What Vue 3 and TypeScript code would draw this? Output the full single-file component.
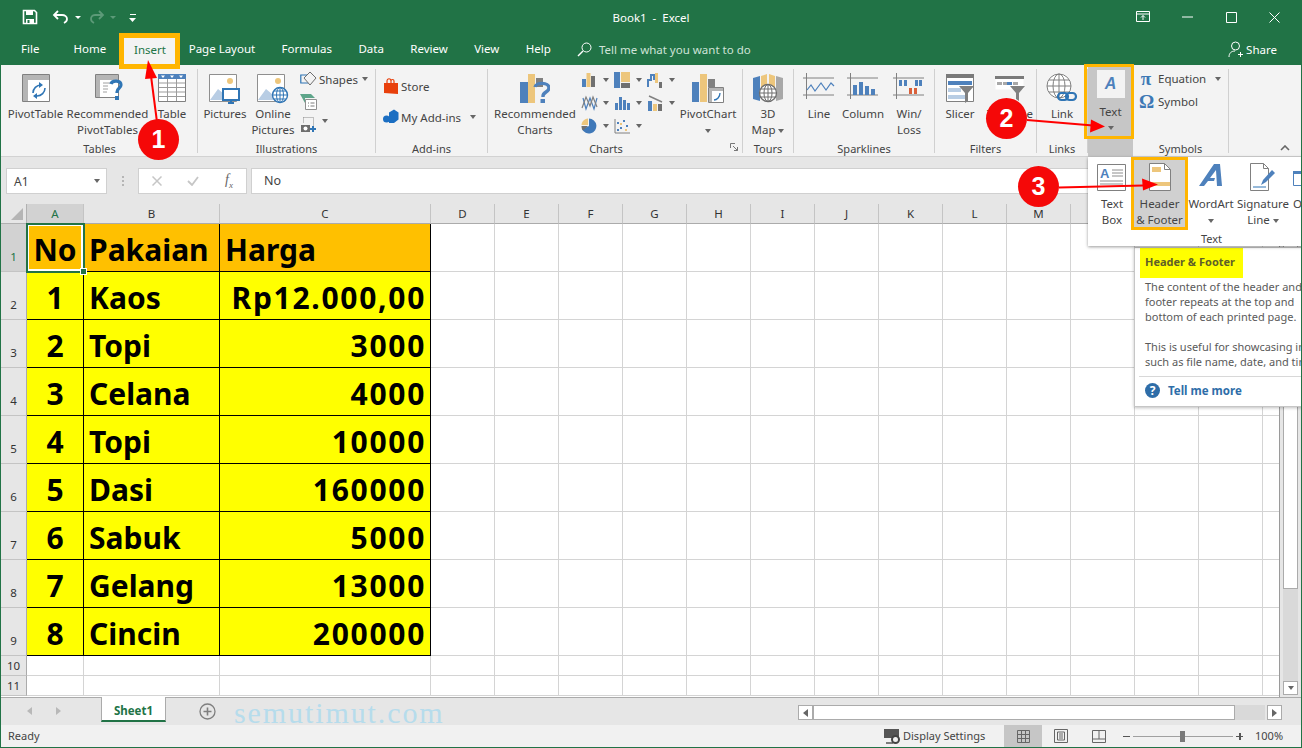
<script setup lang="ts">
const tabs = [
  { name: 'File', cls: 'tab-file' },
  { name: 'Home', cls: '' },
  { name: 'Insert', cls: 'tab-active' },
  { name: 'Page Layout', cls: '' },
  { name: 'Formulas', cls: '' },
  { name: 'Data', cls: '' },
  { name: 'Review', cls: '' },
  { name: 'View', cls: '' },
  { name: 'Help', cls: '' },
]
const cols = ['A', 'B', 'C', 'D', 'E', 'F', 'G', 'H', 'I', 'J', 'K', 'L', 'M', 'N', 'O', 'P', 'Q']
const data: [string, string, string][] = [
  ['1', 'Kaos', 'Rp12.000,00'],
  ['2', 'Topi', '3000'],
  ['3', 'Celana', '4000'],
  ['4', 'Topi', '10000'],
  ['5', 'Dasi', '160000'],
  ['6', 'Sabuk', '5000'],
  ['7', 'Gelang', '13000'],
  ['8', 'Cincin', '200000'],
]
const emptyCols = cols.slice(3)
const chartIcons = [0, 1, 2, 3, 4, 5, 6, 7]
</script>

<template>
  <div class="app">
    <header class="titlebar">
      <div class="qat">
        <svg class="ic" width="16" height="16" viewBox="0 0 16 16"><path d="M1.5 1.5h11l2 2v11h-13z" fill="none" stroke="#fff" stroke-width="1.6"/><path d="M4 2h7v4H4zM4 10h8v5H4z" fill="#fff"/><path d="M5.5 11h2v3h-2z" fill="#217346"/></svg>
        <svg class="ic undo" width="18" height="14" viewBox="0 0 18 14"><path d="M6 1 2 5l4 4M2 5h8c3 0 5 2 5 4s-1 3-3 4" fill="none" stroke="#fff" stroke-width="1.8"/></svg>
        <span class="caret-w"></span>
        <svg class="ic redo" width="16" height="14" viewBox="0 0 16 14"><path d="M10 1l4 4-4 4M14 5H6C3 5 2 7 2 9s1 3 3 4" fill="none" stroke="#5c9a78" stroke-width="1.8"/></svg>
        <span class="caret-w dim"></span>
        <svg class="ic more" width="8" height="9" viewBox="0 0 8 9"><path d="M1 1h6v1H1zM0 5h7L3.500 9z" fill="#fff"/></svg>
      </div>
      <div class="doc-title">Book1&nbsp; -&nbsp; Excel</div>
      <div class="winctl">
        <svg width="14" height="12" viewBox="0 0 14 12"><path d="M.5.5h13v10H.5zM.5 3h13M7 9V4.500M5 6.500l2-2 2 2" fill="none" stroke="#fff"/></svg>
        <svg width="11" height="2" viewBox="0 0 11 2"><path d="M0 1h11" stroke="#fff"/></svg>
        <svg width="11" height="11" viewBox="0 0 11 11"><path d="M.5.5h10v10H.5z" fill="none" stroke="#fff"/></svg>
        <svg width="11" height="11" viewBox="0 0 11 11"><path d="M.5.5l10 10M10.500.5l-10 10" stroke="#fff" fill="none"/></svg>
      </div>
    </header>

    <nav class="tabsbar">
      <div v-for="t in tabs" :key="t.name" class="tab" :class="t.cls">{{ t.name }}</div>
      <svg class="search-ic" width="15" height="15" viewBox="0 0 15 15"><circle cx="9.500" cy="5.500" r="4.500" fill="none" stroke="#fff"/><path d="M6 9l-5 5" stroke="#fff" stroke-width="1.400"/></svg>
      <div class="tellme">Tell me what you want to do</div>
      <div class="share">
        <svg width="16" height="17" viewBox="0 0 16 17"><circle cx="7.500" cy="5" r="4" fill="none" stroke="#fff"/><path d="M1 16c0-4 2.500-6 6-6M12.500 11v5M10 13.500h5" fill="none" stroke="#fff"/></svg>
        <span>Share</span>
      </div>
    </nav>

    <section class="ribbon">
      <!-- Tables -->
      <div class="group g-tables">
        <div class="group-body">
          <div class="big w61 ml3b">
            <svg class="bigic" width="30" height="30" viewBox="0 0 30 30"><path d="M1.500 1.500h27v27h-27z" fill="#fff" stroke="#808080"/><path d="M2 2h26v5H2zM2 7h5v21H2z" fill="#b5b5b5"/><path d="M12 20a8 8 0 0 1 8-8M14 23h2a8 8 0 0 0 8-8" fill="none" stroke="#2f75b5" stroke-width="1.600"/><path d="M18 9l4 3-4 3zM16 20l-4 3 4 3z" fill="#2f75b5"/></svg>
            <span>PivotTable</span>
          </div>
          <div class="big w83">
            <svg class="bigic s5" width="30" height="30" viewBox="0 0 30 30"><path d="M.5 1.500h23v23H.5z" fill="#fff" stroke="#808080"/><path d="M1 2h22v5H1zM1 7h4v17H1z" fill="#b5b5b5"/><path d="M8 10h7M8 13h5M8 16h5M8 19h4" stroke="#a0a0a0"/><path d="M16 11c1-4 10-4 10 1 0 3-4 3-4 7v1" fill="none" stroke="#2f75b5" stroke-width="3.200"/><path d="M20 23h4v4h-4z" fill="#2f75b5"/></svg>
            <span>Recommended<br />PivotTables</span>
          </div>
          <div class="big w46">
            <svg class="bigic" width="30" height="30" viewBox="0 0 30 30"><path d="M1.500 1.500h27v27h-27z" fill="#fff" stroke="#808080"/><path d="M1 1h28v5H1z" fill="#4e81bc"/><path d="M4 2.500h4L6 5zM13 2.500h4L15 5zM22 2.500h4L24 5z" fill="#fff"/><path d="M2 10h26M2 14.500h26M2 19h26M2 23.500h26M10.500 6v22M19.500 6v22" stroke="#9b9b9b"/></svg>
            <span>Table</span>
          </div>
        </div>
        <div class="group-label">Tables</div>
      </div>

      <!-- Illustrations -->
      <div class="group g-illus">
        <div class="group-body">
          <div class="big w48 ml3b">
            <svg class="bigic" width="32" height="32" viewBox="0 0 32 32"><path d="M.5 1.500h27v27H.5z" fill="#fff" stroke="#8f8f8f"/><circle cx="21" cy="8" r="3" fill="#edc67c"/><path d="M1 27l8-11 6 5 3-2 6 8z" fill="#b8cde4"/><path d="M14 16h16v11H14z" fill="#fff" stroke="#2f75b5" stroke-width="2"/><path d="M19 30h6M22 27v3" stroke="#2f75b5" stroke-width="2"/></svg>
            <span>Pictures</span>
          </div>
          <div class="big w48">
            <svg class="bigic" width="32" height="32" viewBox="0 0 32 32"><path d="M.5 1.500h27v27H.5z" fill="#fff" stroke="#8f8f8f"/><circle cx="21" cy="8" r="3" fill="#edc67c"/><path d="M1 27l8-11 6 5 3-2 6 8z" fill="#b8cde4"/><circle cx="23" cy="22" r="7.500" fill="#fff" stroke="#2f75b5" stroke-width="1.400"/><path d="M15.500 22h15M17 18h12M17 26h12M23 14.500v15" stroke="#2f75b5"/><ellipse cx="23" cy="22" rx="3.500" ry="7.500" fill="none" stroke="#2f75b5"/></svg>
            <span>Online<br />Pictures</span>
          </div>
          <div class="smallcol">
            <div class="small h22">
              <svg width="17" height="16" viewBox="0 0 17 16"><path d="M.8 4h8v8h-8z" fill="none" stroke="#2f75b5" stroke-width="1.200"/><path d="M10 1l6 6-6 7-6-7z" fill="#f3f3f3" stroke="#6e6e6e"/></svg>
              <span class="tx ml2">Shapes</span><i class="caret ml4"></i>
            </div>
            <div class="small h22">
              <svg width="17" height="17" viewBox="0 0 17 17"><path d="M0 1h11l4 4H5v5z" fill="#5ea58a"/><path d="M5.500 6.500h11v10h-11z" fill="#fff" stroke="#8f8f8f"/><path d="M8 10h1M8 13h1M10.500 10h4M10.500 13h4" stroke="#7a7a7a"/></svg>
            </div>
            <div class="small h24">
              <svg width="17" height="17" viewBox="0 0 17 17"><path d="M3.500 1.500h10v9" fill="none" stroke="#8a8a8a" stroke-dasharray="1 1"/><path d="M3.500 1.500v6" stroke="#8a8a8a" stroke-dasharray="1 1"/><path d="M1 9h9v7H1z" fill="#6e6e6e"/><circle cx="5.500" cy="12.500" r="2" fill="#fff"/><path d="M10 13h6M13 10v6" stroke="#2f75b5" stroke-width="2"/></svg>
              <i class="caret ml5 up3"></i>
            </div>
          </div>
        </div>
        <div class="group-label">Illustrations</div>
      </div>

      <!-- Add-ins -->
      <div class="group g-addins">
        <div class="group-body addins-body">
          <div class="small h30">
            <svg width="16" height="17" viewBox="0 0 16 17"><path d="M1 5h14v11L1 15z" fill="#e8400c"/><path d="M4 5V3c0-3 4-3 4 0v2M8 3c0-2 3-2 3 0v2" fill="none" stroke="#e8400c" stroke-width="1.200"/></svg>
            <span class="tx ml2">Store</span>
          </div>
          <div class="small h30 mt1">
            <svg width="16" height="16" viewBox="0 0 16 16"><path d="M6 3.500L11 0.500l4.500 3v7L11 14H6z" fill="#1b6ec2"/><circle cx="3.500" cy="10" r="3.500" fill="#1b6ec2"/></svg>
            <span class="tx ml2">My Add-ins</span><i class="caret ml9"></i>
          </div>
        </div>
        <div class="group-label">Add-ins</div>
      </div>

      <!-- Charts -->
      <div class="group g-charts">
        <div class="group-body">
          <div class="big w88 ml3b">
            <svg class="bigic" width="30" height="30" viewBox="0 0 30 30"><path d="M0 9h8v21H0z" fill="#4e81bc"/><path d="M8 1h7v29H8z" fill="#edc67c"/><path d="M16 5h7v9h-7z" fill="#808080"/><path d="M15 14c1-5 14-5 14 1 0 4-6 4-6 8v1" fill="none" stroke="#4e81bc" stroke-width="3.400"/><path d="M20.500 26h4.500v4h-4.500z" fill="#4e81bc"/></svg>
            <span>Recommended<br />Charts</span>
          </div>
          <div class="chart-grid">
            <div v-for="c in chartIcons" :key="c" class="chart-cell">
              <svg width="17" height="16" viewBox="0 0 17 16">
                <g v-if="c === 0"><path d="M1 7h4v8H1z" fill="#4e81bc"/><path d="M5.500 1h4v14h-4z" fill="#edc67c"/><path d="M10 4h4v11h-4z" fill="#707070"/></g>
                <g v-else-if="c === 1"><path d="M0 0h6v16H0z" fill="#4e81bc"/><path d="M7 0h9v10H7z" fill="#edc67c"/><path d="M7 11h9v5H7z" fill="#707070"/></g>
                <g v-else-if="c === 2"><path d="M1 15V8h3V3h3v5" fill="none" stroke="#4e81bc" stroke-width="2"/><path d="M8 1h3v10H8z" fill="#edc67c"/><path d="M12 10h3v6h-3z" fill="#707070"/></g>
                <g v-else-if="c === 3"><path d="M2 3l3 11 4-11 4 11 3-11" fill="none" stroke="#4e81bc" stroke-width="1.200"/><path d="M1 13l4-11 4 9 3-9 4 10" fill="none" stroke="#808080" stroke-width="1.200"/></g>
                <g v-else-if="c === 4"><path d="M1 8h3v7H1zM5 2h3v13H5zM9 5h3v10H9zM13 8h3v7h-3z" fill="#4e81bc"/></g>
                <g v-else-if="c === 5"><path d="M1 6h4v10H1z" fill="#4e81bc"/><path d="M6 9h4v7H6z" fill="#edc67c"/><path d="M11 9h4v7h-4z" fill="#707070"/><path d="M2 1l13 6" stroke="#808080" stroke-width="1.500"/></g>
                <g v-else-if="c === 6"><path d="M8 8V.5A7.500 7.500 0 1 1 1 11z" fill="#3f78b8"/><path d="M7 7V.5C3 1 .5 4 .5 7z" fill="#edc67c"/><path d="M.5 8H7L2 12.500C1 11.500.5 10 .5 8z" fill="#707070"/></g>
                <g v-else><path d="M1 1v14h15" fill="none" stroke="#808080"/><path d="M3 4h2v2H3zM9 2h2v2H9zM6 9h2v2H6zM12 7h2v2h-2zM3 11h2v2H3z" fill="#4e81bc"/><path d="M6 5h2v2H6zM11 11h2v2h-2z" fill="#edc67c"/></g>
              </svg>
              <i class="caret ml5"></i>
            </div>
          </div>
          <div class="big w72">
            <svg class="bigic" width="32" height="30" viewBox="0 0 32 30"><path d="M0 9h7v20H0z" fill="#4e81bc"/><path d="M8 1h7v28H8z" fill="#edc67c"/><path d="M16 6h7v8h-7z" fill="#808080"/><path d="M16.500 14.500h15v15h-15z" fill="#fff" stroke="#808080"/><path d="M17 15h14v3H17zM17 18h3v11h-3z" fill="#b5b5b5"/><path d="M22 27c3 0 6-3 6-7" fill="none" stroke="#2f75b5" stroke-width="1.300"/></svg>
            <span>PivotChart<br /><i class="caret"></i></span>
          </div>
        </div>
        <div class="group-label charts-label">Charts</div>
        <svg class="launcher" width="8" height="8" viewBox="0 0 8 8"><path d="M.5 5V.5H5M3 3l4.500 4.500M7.500 4v3.500H4" fill="none" stroke="#777"/></svg>
      </div>

      <!-- Tours -->
      <div class="group g-tours">
        <div class="group-body">
          <div class="big w50">
            <svg class="bigic" width="30" height="30" viewBox="0 0 30 30"><path d="M0 5l7-2v25l-7-2z" fill="#4e81bc"/><path d="M8 3l6-2v14H8zM16 1l6 2v12h-6z" fill="#edc67c"/><path d="M23 3l7 2v21l-7 2z" fill="#a8a8a8"/><circle cx="15" cy="20" r="8.500" fill="#fff" stroke="#6e6e6e" stroke-width="1.300"/><path d="M6.500 20h17M8 16h14M8 24h14M15 11.500v17" stroke="#6e6e6e"/><ellipse cx="15" cy="20" rx="4" ry="8.500" fill="none" stroke="#6e6e6e"/></svg>
            <span>3D<br />Map <i class="caret"></i></span>
          </div>
        </div>
        <div class="group-label">Tours</div>
      </div>

      <!-- Sparklines -->
      <div class="group g-spark">
        <div class="group-body">
          <div class="big w42 ml4b">
            <svg class="bigic" width="32" height="28" viewBox="0 0 32 28"><path d="M0 5h31M0 22h31M3.500 0v26" stroke="#808080" fill="none"/><path d="M4 17l4-5 4 6 6-8 5 7 5-7 3 3" fill="none" stroke="#4e81bc" stroke-width="1.200"/></svg>
            <span>Line</span>
          </div>
          <div class="big w46">
            <svg class="bigic" width="32" height="28" viewBox="0 0 32 28"><path d="M0 5h31M0 22h31M3.500 0v26" stroke="#808080" fill="none"/><path d="M6 12h4v10H6zM12 9h4v13h-4zM18 13h4v9h-4zM24 16h4v6h-4z" fill="#4e81bc"/></svg>
            <span>Column</span>
          </div>
          <div class="big w46">
            <svg class="bigic" width="32" height="28" viewBox="0 0 32 28"><path d="M0 5h31M0 22h31M3.500 0v26" stroke="#808080" fill="none"/><path d="M6 7h3v6H6zM11 7h3v6h-3zM22 7h3v6h-3" fill="#4e81bc"/><path d="M26 7h3v6h-3z" fill="#4e81bc"/><path d="M16 15h3v6h-3zM21 15h3v6h-3z" fill="#d9603a"/></svg>
            <span>Win/<br />Loss</span>
          </div>
        </div>
        <div class="group-label">Sparklines</div>
      </div>

      <!-- Filters -->
      <div class="group g-filters">
        <div class="group-body">
          <div class="big w50">
            <svg class="bigic" width="30" height="30" viewBox="0 0 30 30"><path d="M1.500 1.500h27v27h-27z" fill="#fff" stroke="#808080"/><path d="M1 1h28v4H1z" fill="#7a7a7a"/><path d="M3 8h24v4H3z" fill="#4e81bc"/><path d="M3 15h13v4H3z" fill="#b8cde4"/><path d="M3 22h20v4H3z" fill="#b8cde4"/><path d="M14 13h15l-6 7v8l-3 2v-10z" fill="#808080"/></svg>
            <span>Slicer</span>
          </div>
          <div class="big w50">
            <svg class="bigic" width="30" height="28" viewBox="0 0 30 28"><path d="M.5 3.500h28v13H.5z" fill="#fff"/><path d="M0 3h29v3H0z" fill="#7a7a7a"/><path d="M2 9h5v3H2zM8 9h5v3H8z" fill="#a9a9a9"/><path d="M12 9h5v3h-5z" fill="#4e81bc"/><path d="M18 9h5v3h-5z" fill="#a9a9a9"/><path d="M15 13h15l-6 7v8l-3-2v-6z" fill="#808080"/></svg>
            <span>Timeline</span>
          </div>
        </div>
        <div class="group-label">Filters</div>
      </div>

      <!-- Links -->
      <div class="group g-links">
        <div class="group-body">
          <div class="big w50">
            <svg class="bigic" width="32" height="30" viewBox="0 0 32 30"><circle cx="13" cy="13" r="12" fill="#fff" stroke="#808080"/><ellipse cx="13" cy="13" rx="6" ry="12" fill="none" stroke="#808080"/><path d="M1 13h24M3 7h20M3 19h20M13 1v24" stroke="#808080"/><rect x="12" y="20" width="10" height="7" rx="3.500" fill="none" stroke="#2f75b5" stroke-width="2.200"/><rect x="20" y="20" width="10" height="7" rx="3.500" fill="none" stroke="#2f75b5" stroke-width="2.200"/></svg>
            <span>Link</span>
          </div>
        </div>
        <div class="group-label">Links</div>
      </div>

      <!-- Text -->
      <div class="group g-text">
        <div class="text-tile"><span class="tile-a">A</span></div>
        <span class="text-label">Text</span>
        <i class="caret"></i>
      </div>

      <!-- Symbols -->
      <div class="group g-symbols">
        <div class="group-body symbols-body">
          <div class="small h23">
            <span class="sym">π</span><span class="tx sym-tx">Equation</span><i class="caret ml9"></i>
          </div>
          <div class="small h23">
            <span class="sym">Ω</span><span class="tx sym-tx">Symbol</span>
          </div>
        </div>
        <div class="group-label symbols-label">Symbols</div>
      </div>

      <svg class="collapse" width="10" height="6" viewBox="0 0 10 6"><path d="M1 5l4-4 4 4" fill="none" stroke="#666" stroke-width="1.600"/></svg>
    </section>

    <section class="formulabar">
      <div class="namebox"><span>A1</span><i class="caret"></i></div>
      <div class="fdots"><b></b><b></b><b></b></div>
      <div class="fbtns">
        <svg width="10" height="10" viewBox="0 0 10 10"><path d="M.5.5l9 9M9.500.5l-9 9" stroke="#c6c6c6" stroke-width="1.500"/></svg>
        <svg width="12" height="10" viewBox="0 0 12 10"><path d="M1 5l4 4 6-8" stroke="#c6c6c6" stroke-width="1.800" fill="none"/></svg>
        <span class="fx">f<sub>x</sub></span>
      </div>
      <div class="finput">No</div>
    </section>

    <section class="sheetwrap">
      <div class="sheet">
        <div class="corner"><span></span></div>
        <div v-for="(c, i) in cols" :key="c" class="colh" :class="{ sel: i === 0 }">{{ c }}</div>

        <div class="rowh sel">1</div>
        <div class="cell head center a1">No<span class="handle"></span></div>
        <div class="cell head">Pakaian</div>
        <div class="cell head">Harga</div>
        <div v-for="c in emptyCols" :key="'r1' + c" class="blank"></div>

        <template v-for="(r, i) in data" :key="r[0]">
          <div class="rowh">{{ i + 2 }}</div>
          <div class="cell body center">{{ r[0] }}</div>
          <div class="cell body">{{ r[1] }}</div>
          <div class="cell body right">{{ r[2] }}</div>
          <div v-for="c in emptyCols" :key="r[0] + c" class="blank"></div>
        </template>

        <template v-for="n in [10, 11]" :key="n">
          <div class="rowh big-n">{{ n }}</div>
          <div v-for="c in cols" :key="n + c" class="blank"></div>
        </template>
      </div>
      <div class="vscroll">
        <div class="vbtn"><i class="caret up"></i></div>
        <div class="vthumb"></div>
        <div class="vtrack"></div>
        <div class="vbtn last"><i class="caret"></i></div>
      </div>
    </section>

    <section class="sheetbar">
      <div class="navs"><i class="tri-l"></i><i class="tri-r"></i></div>
      <div class="sheettab">Sheet1</div>
      <svg class="addsheet" width="17" height="17" viewBox="0 0 17 17"><circle cx="8.500" cy="8.500" r="7.500" fill="none" stroke="#7f7f7f" stroke-width="1.300"/><path d="M8.500 4.500v8M4.500 8.500h8" stroke="#7f7f7f" stroke-width="1.600"/></svg>
      <div class="watermark">semutimut.com</div>
      <div class="hscroll">
        <div class="hbtn"><i class="tri-l dark"></i></div>
        <div class="hthumb"></div>
        <div class="htrack"></div>
        <div class="hbtn end"><i class="tri-r dark"></i></div>
      </div>
    </section>

    <footer class="status">
      <span class="ready">Ready</span>
      <div class="display">
        <svg width="17" height="17" viewBox="0 0 17 17"><path d="M0 1h15v9H0z" fill="#555"/><path d="M2 15h7" stroke="#555" stroke-width="1.500"/><circle cx="11.500" cy="11.500" r="3.500" fill="#f1f1f1" stroke="#444" stroke-width="2"/></svg>
        <span>Display Settings</span>
      </div>
      <div class="view on">
        <svg width="13" height="13" viewBox="0 0 13 13"><path d="M.5.5h12v12H.5zM.5 4.500h12M.5 8.500h12M4.500.5v12M8.500.5v12" fill="none" stroke="#666"/></svg>
      </div>
      <div class="view">
        <svg width="14" height="14" viewBox="0 0 14 14"><path d="M.5.500h13v13H.5z" fill="none" stroke="#666"/><path d="M3.500 3v8h7V3zM5 5h4M5 7h4M5 9h4" fill="none" stroke="#666"/></svg>
      </div>
      <div class="view">
        <svg width="14" height="13" viewBox="0 0 14 13"><path d="M.5.500h13v12H.5zM.5 9h13M7 .5V9" fill="none" stroke="#666"/></svg>
      </div>
      <div class="zoom">
        <span class="zbtn minus"></span>
        <div class="slider"><span class="knob"></span></div>
        <span class="zbtn plus"></span>
      </div>
      <span class="pct">100%</span>
    </footer>

    <!-- Text dropdown gallery, over the sheet -->
    <div class="gallery">
      <div class="g-item t-box">
        <svg width="30" height="28" viewBox="0 0 30 28"><path d="M.5 1.500h28v26H.5z" fill="#fff" stroke="#808080"/><path d="M15 7h11M15 10h11M15 13h11M3 18h23M3 21h23" stroke="#8e8e8e"/><text x="3" y="15" font-family="Liberation Sans, sans-serif" font-weight="700" font-size="13" fill="#4e81bc">A</text></svg>
        <span>Text<br />Box</span>
      </div>
      <div class="g-item hf">
        <svg width="22" height="28" viewBox="0 0 22 28"><path d="M.5.500h15l6 6v21H.5z" fill="#fff" stroke="#808080"/><path d="M15.500.5v6h6" fill="none" stroke="#808080"/><path d="M3 4h9v5H3zM3 19h18v4H3z" fill="#edc67c"/></svg>
        <span>Header<br />&amp; Footer</span>
      </div>
      <div class="g-item wa">
        <svg width="24" height="28" viewBox="0 0 24 28"><path d="M0 23L15 1h6l2 22h-5l-1-16-6 8h5l-1 3H9l-4 5z" fill="#4e81bc"/></svg>
        <span>WordArt<br /><i class="caret"></i></span>
      </div>
      <div class="g-item sig">
        <svg width="26" height="28" viewBox="0 0 26 28"><path d="M.5.500h13l5 5v22H.5z" fill="#fff" stroke="#808080"/><path d="M13.500.5v5h5" fill="none" stroke="#808080"/><path d="M3 24h13" stroke="#2f75b5"/><path d="M11 22l2-5 9-10 3 3-9 9z" fill="#4e81bc"/></svg>
        <span>Signature<br />Line <i class="caret"></i></span>
      </div>
      <div class="g-item obj">
        <svg width="14" height="28" viewBox="0 0 14 28"><path d="M.5 8.500h13v14H.5z" fill="#fff" stroke="#4e81bc"/><path d="M0 8h14v3H0z" fill="#4e81bc"/></svg>
        <span>Object</span>
      </div>
      <div class="gallery-label">Text</div>
    </div>

    <!-- Screen tip -->
    <div class="tip">
      <div class="tip-title">Header &amp; Footer</div>
      <p>The content of the header and<br />footer repeats at the top and<br />bottom of each printed page.</p>
      <p class="p2">This is useful for showcasing information<br />such as file name, date, and time.</p>
      <div class="tip-more">
        <span class="q">?</span>
        <b>Tell me more</b>
      </div>
    </div>

    <!-- Tutorial annotations -->
    <svg class="arrows" width="1302" height="748" viewBox="0 0 1302 748">
      <path d="M157 122 151 76" stroke="#f00" stroke-width="2" fill="none"/>
      <path d="M148 60 157 78 145 79z" fill="#f00"/>
      <path d="M1027 120l66 5.500" stroke="#f00" stroke-width="2" fill="none"/>
      <path d="M1105 126.500l-15 6 1-13z" fill="#f00"/>
      <path d="M1059 187.500l84-2" stroke="#f00" stroke-width="2" fill="none"/>
      <path d="M1158 184.500l-16-6 1 12z" fill="#f00"/>
    </svg>
    <div class="badge b1">1</div>
    <div class="badge b2">2</div>
    <div class="badge b3">3</div>
    <div class="outline o-text"></div>
  </div>
</template>

<style scoped>
.app {
  position: relative;
  width: 1302px;
  height: 748px;
  box-sizing: border-box;
  border: 1px solid #217346;
  overflow: hidden;
  display: flex;
  flex-direction: column;
  background: #fff;
  font-family: "Noto Sans", "Open Sans", sans-serif;
  font-size: 11.5px;
  color: #444;
}
i { display: inline-block; font-style: normal; }
.caret {
  display: inline-block;
  width: 0; height: 0;
  border-left: 3.5px solid transparent;
  border-right: 3.5px solid transparent;
  border-top: 4px solid #666;
  vertical-align: middle;
}
.caret.up { border-top: 0; border-bottom: 4px solid #666; }
.ml2 { margin-left: 2px; } .ml4 { margin-left: 4px; } .ml5 { margin-left: 5px; }
.ml9 { margin-left: 9px; }
.mt1 { margin-top: 1px; }
.up3 { margin-top: -6px; }

/* title bar */
.titlebar {
  height: 32px; flex: none;
  background: #217346;
  display: flex; align-items: center; position: relative; color: #fff;
}
.qat { display: flex; align-items: center; padding-left: 21px; width: 300px; }
.ic.undo { margin-left: 14px; }
.caret-w { width: 0; height: 0; border-left: 3px solid transparent; border-right: 3px solid transparent; border-top: 3px solid #fff; margin-left: 5px; }
.caret-w.dim { border-top-color: #5c9a78; }
.ic.redo { margin-left: 8px; }
.ic.more { margin-left: 13px; }
.doc-title { text-align: center; font-size: 11.5px; position: absolute; left: 0; right: 0; top: 9px; }
.winctl { margin-left: auto; display: flex; align-items: center; width: 165px; justify-content: space-between; padding-right: 21px; box-sizing: border-box; }

/* tabs */
.tabsbar {
  height: 32px; flex: none; background: #217346;
  display: flex; align-items: center; color: #fff; padding-left: 7px;
  font-size: 11.5px; position: relative;
}
.tab { padding: 0 13.200px; line-height: 32px; height: 32px; color: #fff; }
.tab-file { padding-left: 13px; padding-right: 14px; margin-right: 7px; }
.tab-active {
  background: #f3f3f3; color: #217346; box-sizing: border-box;
  border: 5px solid #ffb500; height: 36px; line-height: 24px; padding: 0; width: 61px;
  margin-left: 0; margin-right: -5px; align-self: flex-start; position: relative; z-index: 2; text-align: center;
}
.search-ic { margin-left: 13px; }
.tellme { margin-left: 7px; color: #cfe3d8; }
.share { margin-left: auto; display: flex; align-items: center; gap: 2px; padding-right: 24px; }

/* ribbon */
.ribbon {
  height: 92px; flex: none; background: #f3f3f3;
  display: flex; position: relative; border-bottom: 1px solid #d2d2d2; box-sizing: border-box;
  padding-left: 1px;
}
.group {
  position: relative; flex: none; height: 84px; margin-top: 4px;
  border-right: 1px solid #d0d0d0; box-sizing: border-box;
  display: flex; flex-direction: column;
}
.group-body { display: flex; flex: none; height: 71px; box-sizing: border-box; }
.group-label { flex: none; text-align: center; line-height: 14px; margin-top: 2px; font-size: 11px; color: #444; }
.charts-label { padding-right: 18px; }
.symbols-label { margin-top: 4px; }
.g-tables { width: 196px; }
.g-illus { width: 178px; }
.g-addins { width: 112px; }
.g-charts { width: 255px; }
.g-tours { width: 51px; }
.g-spark { width: 141px; }
.g-filters { width: 102px; }
.g-links { width: 51px; }
.g-symbols { width: 96px; }
.big {
  flex: none; display: flex; flex-direction: column; align-items: center; text-align: center;
  line-height: 16px; white-space: nowrap; padding-top: 4px; box-sizing: border-box; height: 71px;
}
.big span { margin-top: auto; display: block; height: 34px; }
.bigic { flex: none; }
.s5 { margin-left: 5px; }
.w42 { width: 42px; } .w46 { width: 46px; } .w48 { width: 48px; }
.w50 { width: 50px; } .w61 { width: 61px; } .w72 { width: 72px; } .w83 { width: 83px; } .w88 { width: 88px; }
.ml3b { margin-left: 3px; } .ml4b { margin-left: 4px; }
.smallcol { display: flex; flex-direction: column; margin-top: -1px; margin-left: 3px; }
.small { display: flex; align-items: center; white-space: nowrap; }
.h22 { height: 22px; } .h23 { height: 23px; } .h24 { height: 24px; } .h30 { height: 30px; }
.tx { font-size: 11.5px; }
.addins-body { flex-direction: column; padding: 2px 0 0 7px; }
.chart-grid { display: grid; grid-template-columns: 33px 33px 33px; grid-auto-rows: 23px; margin: -1px 0 0 2px; width: 91px; height: 69px; }
.chart-cell { display: flex; align-items: center; }
.launcher { position: absolute; right: 4px; bottom: 2px; }
.g-text {
  width: 45px; height: 92px; margin-top: 0; background: #c6c6c6; border: 0;
  align-items: center; padding-top: 5px;
}
.text-tile { width: 28px; height: 28px; background: #f3f3f3; display: flex; align-items: center; justify-content: center; flex: none; }
.tile-a { font-family: "Liberation Sans", sans-serif; font-weight: 700; font-style: italic; font-size: 16px; line-height: 18px; color: #4e81bc; }
.text-label { line-height: 16px; margin-top: 6px; margin-bottom: 6px; }
.symbols-body { flex-direction: column; margin-top: -2px; padding-left: 6px; }
.sym { font-family: "Liberation Serif", serif; font-size: 19px; font-weight: 700; color: #3d78b5; width: 14px; line-height: 20px; text-align: center; }
.sym-tx { margin-left: 5px; }
.collapse { position: absolute; right: 11px; bottom: 5px; }

/* formula bar */
.formulabar {
  height: 47px; flex: none; background: #e6e6e6; box-sizing: border-box;
  display: flex; padding: 11px 0 10px 5px; align-items: stretch; font-size: 12px;
}
.namebox {
  width: 101px; background: #fff; border: 1px solid #d0d0d0; box-sizing: border-box;
  display: flex; align-items: center; justify-content: space-between; padding: 0 6px 0 7px; color: #444;
}
.fdots { width: 31px; display: flex; flex-direction: column; align-items: center; justify-content: center; gap: 2px; }
.fdots b { width: 2px; height: 2px; background: #b5b5b5; display: block; }
.fbtns {
  width: 109px; background: #fff; border: 1px solid #d0d0d0; box-sizing: border-box;
  display: flex; align-items: center; padding-left: 13px; gap: 25px;
}
.fx { font-family: "Liberation Serif", serif; font-style: italic; font-size: 14px; color: #666; margin-left: 1px; }
.fx sub { font-size: 9px; }
.finput { flex: 1; margin-left: 4px; background: #fff; border: 1px solid #d0d0d0; border-right: 0; padding-left: 12px; line-height: 23px; color: #444; font-size: 12.500px; }

/* sheet */
.sheetwrap { flex: none; height: 493px; display: flex; overflow: hidden; background: #e6e6e6; }
.sheet {
  width: 1279px; flex: none; overflow: hidden; background: #fff;
  display: grid;
  grid-template-columns: 26px 57px 136px 211px repeat(13, 64px) 17px;
  grid-template-rows: 20px repeat(9, 48px) 20px 20px;
  align-content: start;
  border-right: 1px solid #9a9a9a;
  box-sizing: border-box;
}
.corner { background: #e6e6e6; border-right: 1px solid #b1b1b1; border-bottom: 1px solid #b1b1b1; box-sizing: border-box; position: relative; }
.corner span {
  position: absolute; right: 3px; bottom: 3px; width: 0; height: 0;
  border-left: 12px solid transparent; border-bottom: 12px solid #b5b5b5;
}
.colh {
  background: #e6e6e6; border-right: 1px solid #c4c4c4; border-bottom: 1px solid #ababab; box-sizing: border-box;
  text-align: center; line-height: 19px; font-size: 11.5px; color: #333;
}
.colh.sel { background: #d2d2d2; color: #217346; border-bottom-color: #217346; }
.rowh {
  background: #e6e6e6; border-right: 1px solid #ababab; border-bottom: 1px solid #c4c4c4; box-sizing: border-box;
  display: flex; align-items: flex-end; justify-content: center; padding-bottom: 7px; font-size: 11.5px; color: #333;
}
.rowh.sel { background: #d2d2d2; color: #217346; border-right-color: #217346; }
.rowh.big-n { align-items: center; padding: 0; }
.blank { border-right: 1px solid #d4d4d4; border-bottom: 1px solid #d4d4d4; box-sizing: border-box; }
.cell {
  box-sizing: border-box; border-right: 1px solid #000; border-bottom: 1px solid #000;
  font-weight: 700; font-size: 30px; color: #000; line-height: 47px; padding: 2px 6px 0 5px; white-space: nowrap;
}
.cell.head { background: #ffc000; }
.cell.body { background: #ff0; }
.center { text-align: center; padding-left: 0; padding-right: 0; }
.right { text-align: right; padding-right: 4px; letter-spacing: 1.7px; }
.a1 { position: relative; outline: 2px solid #217346; outline-offset: -1px; box-shadow: inset 0 0 0 2px #fff; }
.handle { position: absolute; right: -4px; bottom: -4px; width: 5px; height: 5px; background: #217346; border: 1px solid #fff; }
.vscroll { flex: 1; display: flex; flex-direction: column; padding: 0 3px; }
.vbtn { height: 16px; flex: none; background: #fff; border: 1px solid #ababab; box-sizing: border-box; display: flex; align-items: center; justify-content: center; }
.vbtn.last { height: 14px; margin-bottom: 2px; }
.vthumb { height: 369px; flex: none; background: #fff; border: 1px solid #ababab; border-top: 0; box-sizing: border-box; }
.vtrack { flex: 1; background: #d9d9d9; }

/* sheet tabs */
.sheetbar { flex: none; height: 28px; background: #e6e6e6; border-top: 1px solid #ababab; box-sizing: border-box; display: flex; position: relative; }
.navs { width: 100px; display: flex; align-items: center; padding-left: 26px; gap: 24px; box-sizing: border-box; height: 26px; }
.tri-l, .tri-r { width: 0; height: 0; border-top: 4px solid transparent; border-bottom: 4px solid transparent; }
.tri-l { border-right: 5px solid #b8b8b8; }
.tri-r { border-left: 5px solid #b8b8b8; }
.tri-l.dark { border-right-color: #666; }
.tri-r.dark { border-left-color: #666; }
.sheettab {
  width: 65px; height: 25px; background: #fff; border: 1px solid #ababab; border-top: 0; border-bottom: 2px solid #217346; box-sizing: border-box;
  text-align: center; font-weight: 700; font-size: 11.500px; color: #217346; line-height: 27px; margin-top: -1px;
}
.addsheet { margin: 5px 0 0 33px; }
.watermark { margin-left: 18px; font-family: "Liberation Serif", serif; font-size: 30px; line-height: 29px; letter-spacing: 1.900px; color: #b6dcec; white-space: nowrap; }
.hscroll { position: absolute; left: 797px; top: 7px; width: 484px; height: 15px; display: flex; }
.hbtn { width: 15px; background: #fff; border: 1px solid #ababab; box-sizing: border-box; display: flex; align-items: center; justify-content: center; flex: none; }
.hthumb { width: 422px; background: #fff; border: 1px solid #ababab; box-sizing: border-box; flex: none; }
.htrack { width: 30px; background: #d9d9d9; flex: none; }
.hbtn.end { margin-left: 2px; }

/* status */
.status { flex: 1; background: #f1f1f1; display: flex; align-items: center; font-size: 11px; color: #444; position: relative; }
.ready { margin-left: 7px; }
.ready, .display span, .pct { transform: translateY(-1px); }
.display { position: absolute; left: 883px; top: 0; height: 100%; display: flex; align-items: center; gap: 2px; }
.view { position: absolute; top: 0; height: 100%; width: 38px; display: flex; align-items: center; justify-content: center; }
.view.on { left: 1003px; background: #c6c6c6; }
.view:nth-of-type(3) { left: 1041px; }
.view:nth-of-type(4) { left: 1079px; }
.zoom { position: absolute; left: 1122px; top: 0; height: 100%; display: flex; align-items: center; width: 126px; }
.zbtn { position: relative; width: 7px; height: 7px; flex: none; }
.zbtn.minus::before, .zbtn.plus::before { content: ""; position: absolute; left: 0; right: 0; top: 3px; height: 1.500px; background: #555; }
.zbtn.plus::after { content: ""; position: absolute; top: 0; bottom: 0; left: 3px; width: 1.500px; background: #555; }
.slider { flex: none; width: 100px; height: 1px; background: #a0a0a0; margin: 0 3px; position: relative; }
.knob { position: absolute; left: 47px; top: -5px; width: 5px; height: 11px; background: #7a7a7a; }
.pct { position: absolute; left: 1254px; }

/* gallery */
.gallery {
  position: absolute; left: 1087px; top: 156px; width: 215px; height: 89px; background: #fff;
  box-shadow: 0 1px 3px rgba(0,0,0,.4); display: flex; z-index: 3;
}
.g-item { flex: none; display: flex; flex-direction: column; align-items: center; text-align: center; line-height: 16px; padding-top: 6px; box-sizing: border-box; white-space: nowrap; height: 73px; }
.g-item span { margin-top: auto; height: 32px; display: block; margin-bottom: 2px; }
.t-box { width: 43px; padding-left: 5px; }
.hf { width: 57px; background: #d0d0d0; outline: 3px solid #ffb500; outline-offset: -3px; }
.wa { width: 44px; margin-left: 1px; }
.sig { width: 58px; margin-left: 1px; }
.obj { width: 20px; overflow: hidden; margin-left: 1px; align-items: flex-start; }
.gallery-label { position: absolute; left: 0; right: 0; bottom: 0; text-align: center; line-height: 14px; font-size: 11px; padding-left: 32px; }

/* tip */
.tip {
  position: absolute; left: 1133px; top: 246px; width: 200px; height: 160px; background: #fff; z-index: 2;
  border: 1px solid #c6c6c6; box-shadow: 0 1px 3px rgba(0,0,0,.25); box-sizing: border-box; font-size: 11px; line-height: 15px; color: #5a5a5a; white-space: nowrap;
}
.tip-title { position: absolute; left: 5px; top: 0; width: 103px; height: 30px; background: #ff0; font-weight: 700; line-height: 28px; padding-left: 5px; box-sizing: border-box; color: #5f5f28; }
.tip p { margin: 0; position: absolute; left: 10px; top: 31px; }
.tip p.p2 { top: 91px; }
.tip-more { position: absolute; left: 0; top: 128px; border-top: 1px solid #d8d8d8; display: flex; align-items: center; gap: 8px; width: 190px; margin: 0 4px; padding: 6px 0 0 6px; }
.tip-more b { color: #2e6da8; font-size: 11.500px; }
.q { width: 15px; height: 15px; border-radius: 50%; background: #2e6da8; color: #fff; font-weight: 700; font-size: 12px; line-height: 15px; text-align: center; }

/* annotation */
.arrows { position: absolute; left: -1px; top: -1px; z-index: 5; pointer-events: none; }
.badge {
  position: absolute; width: 41px; height: 41px; border-radius: 50%; background: #f50808; color: #fff; z-index: 6;
  font-family: "Liberation Sans", sans-serif; font-weight: 700; font-size: 25px; line-height: 41px; text-align: center;
}
.b1 { left: 137px; top: 118px; }
.b2 { left: 985px; top: 97px; }
.b3 { left: 1017px; top: 165px; }
.outline { position: absolute; z-index: 4; box-sizing: border-box; border: 3px solid #ffb500; }
.o-text { left: 1083px; top: 63px; width: 50px; height: 75px; }
</style>

<style>
html, body { margin: 0; padding: 0; background: #fff; }
</style>
